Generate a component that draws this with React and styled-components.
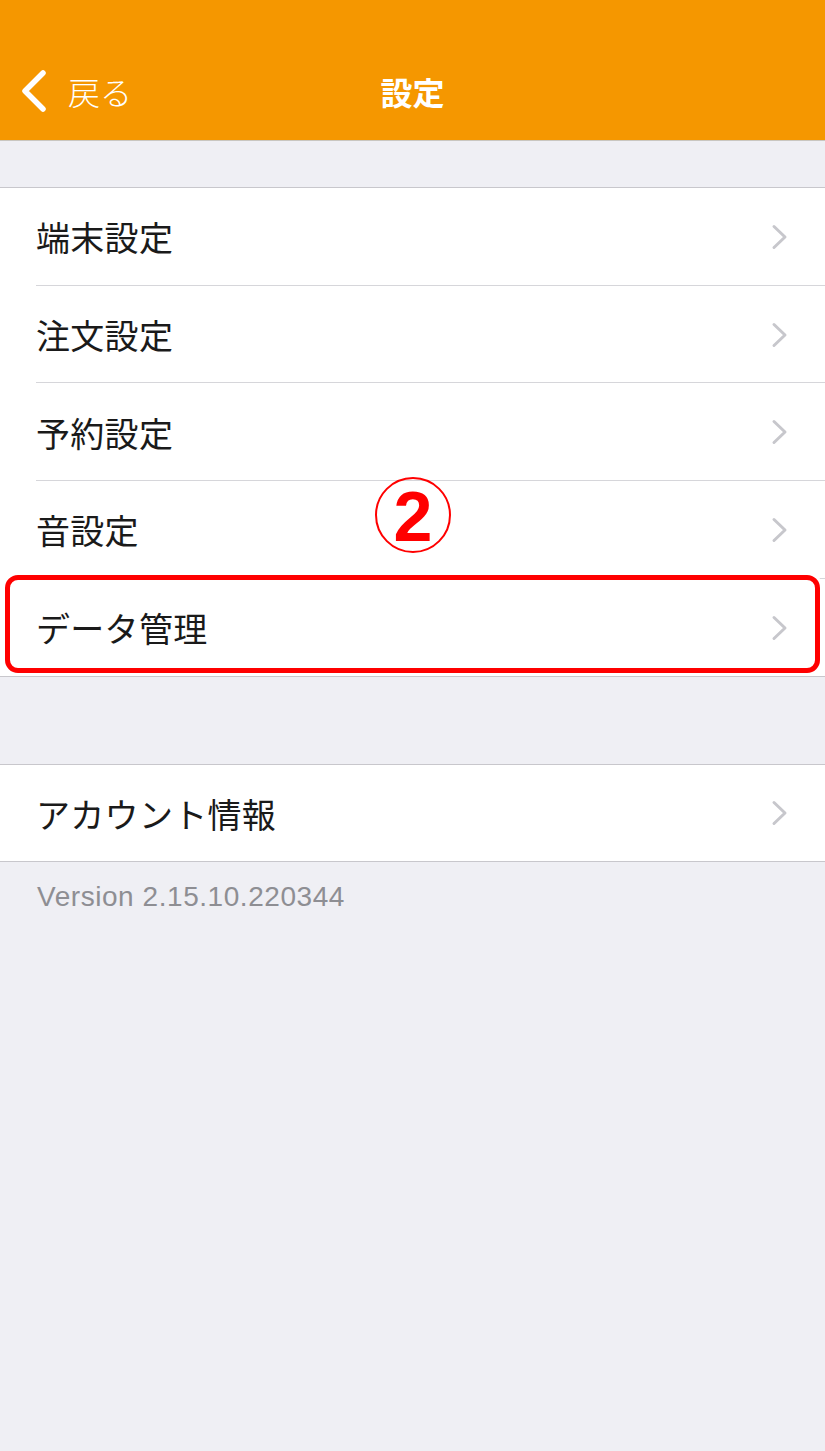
import React from "react";
import styled, { createGlobalStyle } from "styled-components";

const Global = createGlobalStyle`
  html, body { margin: 0; padding: 0; background: #efeff4; }
  body { font-family: "Noto Sans CJK JP", "Noto Sans", sans-serif; }
  * { box-sizing: border-box; }
`;

const Page = styled.div`
  width: 825px;
  min-height: 1451px;
  background: #efeff4;
  display: flex;
  flex-direction: column;
`;

const NavBar = styled.header`
  height: 141px;
  background: #f59700;
  border-bottom: 1px solid #c9c6c0;
  position: relative;
  display: flex;
  align-items: flex-end;
  padding-bottom: 26px;
`;

const BackButton = styled.div`
  display: flex;
  align-items: center;
  gap: 20px;
  padding-left: 20px;
  color: #fff;
  font-size: 32px;
  font-weight: 300;
  height: 46px;
`;

const Title = styled.div`
  position: absolute;
  left: 0;
  right: 0;
  bottom: 26px;
  height: 46px;
  line-height: 46px;
  text-align: center;
  color: #fff;
  font-size: 32px;
  font-weight: 700;
  pointer-events: none;
`;

const Group = styled.section`
  margin-top: ${(p) => p.$top}px;
  background: #fff;
  border-top: 1px solid #c8c7cc;
  border-bottom: 1px solid #c8c7cc;
  display: flex;
  flex-direction: column;
`;

const Row = styled.div`
  position: relative;
  height: ${(p) => p.$h || 97.7}px;
  display: flex;
  align-items: center;
  padding-left: 36px;
  padding-right: 36px;
  &:not(:last-child)::after {
    content: "";
    position: absolute;
    left: 36px;
    right: 0;
    bottom: 0;
    height: 1px;
    background: #d6d6da;
  }
`;

const Label = styled.span`
  flex: 1;
  font-size: 34px;
  color: #1a1a1a;
  letter-spacing: 0.3px;
`;

const Highlight = styled.div`
  position: absolute;
  left: 5px;
  right: 5px;
  top: -4px;
  bottom: 3px;
  border: 5px solid #ff0000;
  border-radius: 13px;
  box-shadow: 0 0 0 3px #fff;
  pointer-events: none;
`;

const Badge = styled.div`
  position: absolute;
  left: 375px;
  top: -4px;
  width: 76px;
  height: 76px;
  border: 2.5px solid #ff0000;
  border-radius: 50%;
  display: flex;
  align-items: center;
  justify-content: center;
  color: #ff0000;
  font-family: "Liberation Sans", Arial, sans-serif;
  font-weight: 700;
  font-size: 70px;
  line-height: 1;
  padding-top: 4px;
`;

const Version = styled.div`
  padding: 19px 37px 0;
  font-family: "Liberation Sans", Arial, sans-serif;
  font-size: 28px;
  letter-spacing: 0.55px;
  color: #8e8e93;
`;

const Chevron = () => (
  <svg width="18" height="26" viewBox="0 0 18 26">
    <path d="M3 2.5 L14 13 L3 23.5" fill="none" stroke="#c7c7cc" strokeWidth="3" strokeLinecap="round" strokeLinejoin="round" />
  </svg>
);

const BackChevron = () => (
  <svg width="28" height="42" viewBox="0 0 28 42">
    <path d="M23 3 L5 21 L23 39" fill="none" stroke="#fff" strokeWidth="5.5" strokeLinecap="round" strokeLinejoin="round" />
  </svg>
);

const items = ["端末設定", "注文設定", "予約設定", "音設定", "データ管理"];

export default function App() {
  return (
    <Page>
      <Global />
      <NavBar>
        <BackButton>
          <BackChevron />
          <span>戻る</span>
        </BackButton>
        <Title>設定</Title>
      </NavBar>
      <Group $top={46}>
        {items.map((t, i) => (
          <Row key={t}>
            <Label>{t}</Label>
            <Chevron />
            {i === 3 && <Badge>2</Badge>}
            {i === 4 && <Highlight />}
          </Row>
        ))}
      </Group>
      <Group $top={87}>
        <Row $h={96}>
          <Label>アカウント情報</Label>
          <Chevron />
        </Row>
      </Group>
      <Version>Version 2.15.10.220344</Version>
    </Page>
  );
}
